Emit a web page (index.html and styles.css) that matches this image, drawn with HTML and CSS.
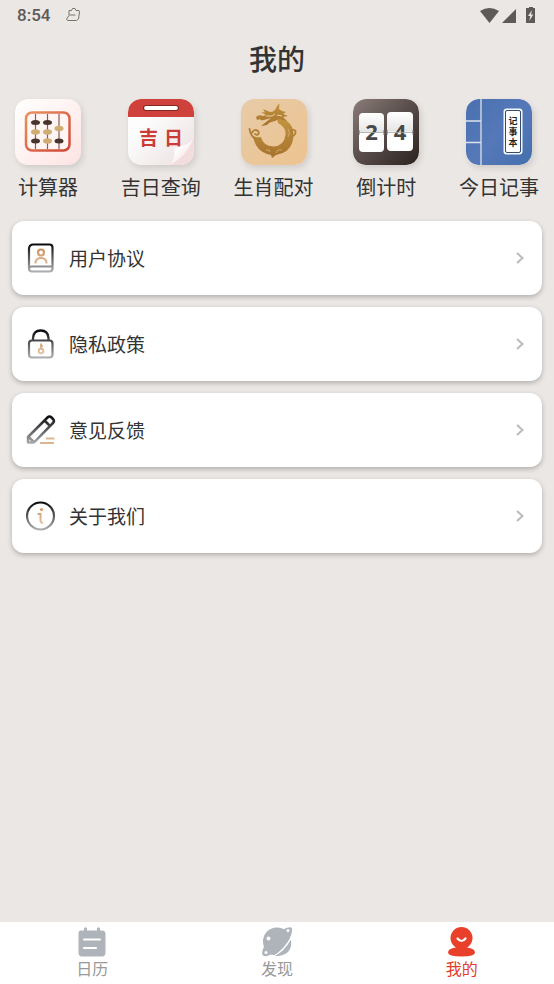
FILE: index.html
```html
<!DOCTYPE html>
<html lang="zh-CN">
<head>
  <meta charset="UTF-8">
  <meta name="viewport" content="width=device-width, initial-scale=1">
  <title>我的</title>
  <link rel="stylesheet" href="styles.css">
</head>
<body>

  <div class="status-bar">
    <span class="clock">8:54</span>
    <svg class="status-app" width="16" height="16" viewBox="0 0 16 16" fill="none" stroke="#77736f">
      <path d="M4 3.500H6.500L7.500 1.500H10L11 3.500H14L14.500 5L13.500 12L11.500 13.500H2.500L1.500 12L4 8.500V3.500ZM4.500 8H10.500"/>
    </svg>
    <svg class="status-icons" width="58" height="18" viewBox="0 0 58 18" fill="#5d5a58">
      <path d="M1 5Q10.500-1 20 5L10.500 17Z"/>
      <path d="M37 3V17H23Z"/>
      <path d="M48 2H50V1H54V2H56V17H47V2Z"/>
      <path d="M53 4L49 10H51.300L50.300 15L54.300 8.500H52Z" fill="#ebe7e4"/>
    </svg>
  </div>

  <h1>我的</h1>

  <div class="tools">
    <button class="tool">
      <svg class="tile" viewBox="0 0 66 66">
        <defs>
          <linearGradient id="pink" x1="0" y1="0" x2="1" y2="1"><stop offset="0" stop-color="#fff"/><stop offset=".4" stop-color="#fff5f4"/><stop offset="1" stop-color="#fde2e2"/></linearGradient>
          <linearGradient id="frame" x1="0" y1="0" x2="1" y2="1"><stop offset="0" stop-color="#e8935f"/><stop offset="1" stop-color="#cf4638"/></linearGradient>
        </defs>
        <rect width="66" height="66" rx="13" fill="url(#pink)"/>
        <rect x="11" y="13.500" width="43.500" height="38" rx="6" fill="#fff6f3" stroke="url(#frame)" stroke-width="2.500"/>
        <path d="M20.500 15V50M32.500 15V50M44 15V50" stroke="#8d5a5c" stroke-width="1.200"/>
        <g fill="#49332f">
          <ellipse cx="20.500" cy="23.500" rx="4.500" ry="2.500"/><ellipse cx="32.500" cy="23.500" rx="4.500" ry="2.500"/>
          <ellipse cx="20.500" cy="42" rx="4.500" ry="2.500"/><ellipse cx="44" cy="42" rx="4.500" ry="2.500"/>
        </g>
        <g fill="#d0ad72">
          <ellipse cx="20.500" cy="33" rx="4.500" ry="2.800"/><ellipse cx="32.500" cy="33" rx="4.500" ry="2.800"/>
          <ellipse cx="44" cy="29.500" rx="4.500" ry="2.800"/><ellipse cx="32.500" cy="42" rx="4.500" ry="2.800"/>
        </g>
      </svg>
      <span>计算器</span>
    </button>

    <button class="tool">
      <svg class="tile" viewBox="0 0 66 66">
        <defs>
          <linearGradient id="paper" x1="0" y1="0" x2="1" y2="1"><stop offset=".3" stop-color="#fdfdfd"/><stop offset="1" stop-color="#eadfe0"/></linearGradient>
          <linearGradient id="curl" x1="0" y1="0" x2="1" y2="1"><stop offset="0" stop-color="#f6d2d2"/><stop offset=".35" stop-color="#fff"/><stop offset="1" stop-color="#f4cfd0"/></linearGradient>
          <clipPath id="round"><rect width="66" height="66" rx="13"/></clipPath>
        </defs>
        <g clip-path="url(#round)">
          <rect width="66" height="66" fill="url(#paper)"/>
          <rect width="66" height="18" fill="#cf423b"/>
          <path d="M66 40V66H43Z" fill="#f3dcdd"/>
        </g>
        <rect x="15.500" y="6.500" width="35" height="5" rx="2.500" fill="#fff" stroke="#832923" stroke-width="1.200"/>
        <text class="lucky" x="11" y="46">吉</text>
        <text class="lucky" x="36" y="46">日</text>
        <path d="M65 41Q56 49 45 48Q49 56 43 65Q57 59 65 41Z" fill="url(#curl)"/>
      </svg>
      <span>吉日查询</span>
    </button>

    <button class="tool">
      <svg class="tile" viewBox="0 0 66 66">
        <defs>
          <linearGradient id="sand" x1="0" y1="0" x2="1" y2="1"><stop offset="0" stop-color="#e7cba8"/><stop offset="1" stop-color="#edc38f"/></linearGradient>
          <linearGradient id="gold" x1="0" y1="0" x2="0" y2="1"><stop offset="0" stop-color="#c1953f"/><stop offset="1" stop-color="#a7722d"/></linearGradient>
        </defs>
        <rect width="66" height="66" rx="13" fill="url(#sand)"/>
        <g fill="url(#gold)">
          <path d="M12 37Q14 51 26 55L30 56L31 59L35 56Q48 54 51.500 43Q55 29 46 22Q42 18 36 20L37 24Q45 28 44.500 36Q43 47 32.500 47.500Q22 47 20 38Q17 39 12 37Z"/>
          <path d="M15 18Q18 15 22 17L25 16L20 13L24 13.500L22 10L29 13Q34 13 36 7L38.500 4.500L38 10L41 12L45 13L42 15L47 17L42 18L46 22L38 20L34 22Q28 23 26 26L20 27L25 23L30 19L23 21Q19 22 19 20L16 21Z"/>
        </g>
        <path d="M25 17L31 17L34 15M36 16L41 17" fill="none" stroke="#ecd09d"/>
        <path d="M17 41Q10 39 8.500 30M10 35Q13 29 17 32Q19 35 16 36L14 35M49 38Q55 37 54.500 32Q51 29 49 33L51 34" fill="none" stroke="#b08038" stroke-width="1.800" stroke-linecap="round"/>
        <path d="M25 51Q29 50 29 53M35 54Q36 50 41 51M47 30Q50 34 47 38" fill="none" stroke="#dbb277" stroke-width=".8"/>
      </svg>
      <span>生肖配对</span>
    </button>

    <button class="tool">
      <svg class="tile" viewBox="0 0 66 66">
        <defs>
          <linearGradient id="dark" x1="0" y1="0" x2="1" y2="1"><stop offset="0" stop-color="#8a7c79"/><stop offset=".5" stop-color="#574c49"/><stop offset="1" stop-color="#2b211d"/></linearGradient>
          <linearGradient id="flip" x1="0" y1="0" x2="0" y2="1"><stop offset="0" stop-color="#fff"/><stop offset=".49" stop-color="#e5e5e5"/><stop offset=".52" stop-color="#fff"/></linearGradient>
        </defs>
        <rect width="66" height="66" rx="13" fill="url(#dark)"/>
        <rect x="6" y="14" width="25" height="39" rx="4" fill="url(#flip)"/>
        <rect x="34" y="13" width="26" height="39" rx="4" fill="url(#flip)"/>
        <text class="digit" x="18.500" y="41">2</text>
        <text class="digit" x="47" y="41">4</text>
        <path d="M6 33.500H31M34 33.500H60" stroke="#aaa" stroke-width=".8"/>
        <path d="M6 31V36M31 31V36M34 31V36M60 31V36" stroke="#776f6c"/>
      </svg>
      <span>倒计时</span>
    </button>

    <button class="tool">
      <svg class="tile" viewBox="0 0 66 66">
        <defs>
          <linearGradient id="blue" x1="0" y1="0" x2="1" y2="1"><stop offset="0" stop-color="#4a70af"/><stop offset=".5" stop-color="#5579b8"/><stop offset="1" stop-color="#456fae"/></linearGradient>
        </defs>
        <rect width="66" height="66" rx="13" fill="url(#blue)"/>
        <path d="M15 0V66M0 22H15M0 43.500H15" stroke="#dce2ec" stroke-width="1.300"/>
        <rect x="37.500" y="9.500" width="19" height="46" rx="3" fill="#f5f8fc"/>
        <rect x="39.500" y="11.500" width="15" height="42" rx="1.500" fill="#fff" stroke="#344a6e"/>
        <text class="note" x="47" y="25">记</text>
        <text class="note" x="47" y="36">事</text>
        <text class="note" x="47" y="47">本</text>
      </svg>
      <span>今日记事</span>
    </button>
  </div>

  <div class="menu">
    <button class="card">
      <svg class="card-icon" viewBox="0 0 30 30" fill="none">
        <defs>
          <linearGradient id="ink" gradientUnits="userSpaceOnUse" x1="0" y1="1" x2="0" y2="29"><stop offset="0" stop-color="#08090c"/><stop offset="1" stop-color="#aeb0b2"/></linearGradient>
          <linearGradient id="tan" gradientUnits="userSpaceOnUse" x1="0" y1="4" x2="0" y2="26"><stop offset="0" stop-color="#c98f58"/><stop offset="1" stop-color="#e6c9ae"/></linearGradient>
        </defs>
        <path d="M3 26V6Q3 1.500 7.500 1.500H23.500Q26.500 1.500 26.500 4.500V25.500Q26.500 28.500 23.500 28.500H6Q3 28.500 3 25.500Q3 23.500 6 23.500H26" stroke="url(#ink)" stroke-width="2.200"/>
        <circle cx="15" cy="9.500" r="3" stroke="url(#tan)" stroke-width="2.200"/>
        <path d="M9.500 20.500Q9.500 15 15 15Q20.500 15 20.500 20.500" stroke="url(#tan)" stroke-width="2.200"/>
      </svg>
      <span>用户协议</span>
      <svg class="arrow" viewBox="0 0 8 12"><path d="M1 1L6.500 6L1 11"/></svg>
    </button>

    <button class="card">
      <svg class="card-icon" viewBox="0 0 30 30" fill="none">
        <path d="M7 11V9Q7.500 1.500 14.700 1.500Q22 1.500 22.500 9V11" stroke="url(#ink)" stroke-width="2.300"/>
        <rect x="3" y="11.500" width="23.500" height="17" rx="3" stroke="url(#ink)" stroke-width="2.200"/>
        <path d="M15 14.500V20M15 17H17" stroke="url(#tan)" stroke-width="2"/>
        <circle cx="15" cy="22" r="2.300" stroke="url(#tan)" stroke-width="2"/>
      </svg>
      <span>隐私政策</span>
      <svg class="arrow" viewBox="0 0 8 12"><path d="M1 1L6.500 6L1 11"/></svg>
    </button>

    <button class="card">
      <svg class="card-icon" viewBox="0 0 30 30" fill="none">
        <path d="M2 27.500V22L21.500 2.500Q23.500.5 25.500 2.500L27 4Q29 6 27 8L8 27.500ZM18.500 5.500L24 11M2.500 22L8 27" stroke="url(#ink)" stroke-width="2.500" stroke-linejoin="round"/>
        <path d="M20 23.500H28.500M14 28H28" stroke="#dcb692" stroke-width="2"/>
      </svg>
      <span>意见反馈</span>
      <svg class="arrow" viewBox="0 0 8 12"><path d="M1 1L6.500 6L1 11"/></svg>
    </button>

    <button class="card">
      <svg class="card-icon" viewBox="0 0 30 30" fill="none">
        <circle cx="14.500" cy="15" r="13.500" stroke="url(#ink)" stroke-width="2.200"/>
        <circle cx="15.500" cy="8.500" r="1.600" fill="#d69a68"/>
        <path d="M11.500 13H14.500V19Q14.500 22.500 17 21.500" stroke="url(#tan)" stroke-width="2"/>
      </svg>
      <span>关于我们</span>
      <svg class="arrow" viewBox="0 0 8 12"><path d="M1 1L6.500 6L1 11"/></svg>
    </button>
  </div>

  <nav class="tabs">
    <a class="tab" href="#calendar">
      <svg viewBox="0 0 30 30">
        <path d="M4 4H7V2Q8.500-.5 10 2V4H20V2Q21.500-.5 23 2V4H25Q28.500 4 28.500 7.500V26Q28.500 30 25 30H5Q1.500 30 1.500 26V7Q1.500 4 4 4Z"/>
        <path d="M7 13H23M7 21.500H19" fill="none" stroke="#fff" stroke-width="2.200" stroke-linecap="round"/>
      </svg>
      <span>日历</span>
    </a>
    <a class="tab" href="#discover">
      <svg viewBox="0 0 30 30">
        <circle cx="15" cy="15" r="14"/>
        <path d="M10 30Q22 24 30 8V15Q24 24 13 30Z" fill="#fff"/>
        <path d="M2 20Q-3 31 5 29.500Q15 27 22 19Q31 9 30 2Q29-1 21 3Z"/>
        <path d="M13 29.500Q22 25 29 13Q31 28 16 29.500Z"/>
        <circle cx="6.500" cy="12" r="2" fill="#fff"/>
        <circle cx="26" cy="4" r="1.500" fill="#fff"/>
        <circle cx="4" cy="26" r="1.500" fill="#fff"/>
      </svg>
      <span>发现</span>
    </a>
    <a class="tab active" href="#mine">
      <svg viewBox="0 0 30 30">
        <circle cx="14.500" cy="11.500" r="11"/>
        <path d="M9 19H20V21Q28 22 28 26Q28 30 14.500 30Q1 30 1 26Q1 22 9 21Z"/>
        <path d="M10.500 12Q14.500 17 18.500 12" fill="none" stroke="#fff" stroke-width="2.200" stroke-linecap="round"/>
      </svg>
      <span>我的</span>
    </a>
  </nav>

</body>
</html>
```
FILE: styles.css
```css
* {
  box-sizing: border-box;
}

body {
  display: flex;
  flex-direction: column;
  min-height: 100vh;
  margin: 0;
  background-color: #ebe7e4;
  color: #333;
  font-family: "Noto Sans CJK SC", sans-serif;
}

button {
  padding: 0;
  border: 0;
  background: none;
  color: inherit;
  font-family: inherit;
  cursor: pointer;
}

svg {
  display: block;
  flex: none;
}

.status-bar {
  display: flex;
  align-items: center;
  height: 30px;
  padding: 0 17px;
}

.clock {
  color: #5d5a58;
  font: 500 17px/20px Roboto, sans-serif;
}

.status-app {
  margin-left: 15px;
}

.status-icons {
  margin-left: auto;
}

h1 {
  margin: 7px 0 0;
  font-size: 28px;
  font-weight: 500;
  line-height: 42px;
  text-align: center;
}

.tools {
  display: flex;
  justify-content: space-between;
  padding: 20px 14px 0 7px;
}

.tool {
  display: flex;
  flex-direction: column;
  align-items: center;
  gap: 8px;
  width: 82px;
  font-size: 20px;
  line-height: 28px;
  white-space: nowrap;
}

.tile {
  width: 66px;
  height: 66px;
  border-radius: 13px;
  box-shadow: 2px 3px 6px rgba(0, 0, 0, 0.12);
}

.lucky {
  fill: #cc3b35;
  font-size: 19px;
  font-weight: bold;
}

.digit {
  fill: #484848;
  font: bold 22px "Open Sans", sans-serif;
  text-anchor: middle;
}

.note {
  fill: #222;
  font: bold 9px "Liberation Sans", "Noto Sans CJK SC", sans-serif;
  text-anchor: middle;
}

.menu {
  display: flex;
  flex-direction: column;
  gap: 12px;
  padding: 20px 12px;
}

.card {
  display: flex;
  align-items: center;
  height: 74px;
  padding: 0 18px 0 14px;
  border-radius: 12px;
  background-color: #fff;
  box-shadow: 0 2px 5px rgba(0, 0, 0, 0.25);
  font-size: 19px;
  line-height: 28px;
}

.card-icon {
  width: 30px;
  height: 30px;
  margin-right: 13px;
}

.arrow {
  width: 8px;
  height: 12px;
  margin-left: auto;
  fill: none;
  stroke: #bbb;
  stroke-width: 2;
}

.tabs {
  display: flex;
  height: 62px;
  margin-top: auto;
  padding-top: 4px;
  background-color: #fff;
}

.tab {
  display: flex;
  flex: 1;
  flex-direction: column;
  align-items: center;
  color: #999;
  font-size: 16px;
  line-height: 22px;
  text-decoration: none;
}

.tab svg {
  width: 30px;
  height: 31px;
  fill: #afb3ba;
}

.tab.active {
  color: #e43c2c;
}

.tab.active svg {
  fill: #e9402b;
}
```
